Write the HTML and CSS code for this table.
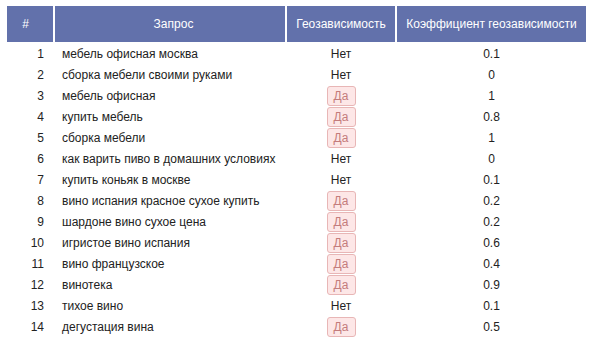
FILE: index.html
```html
<!DOCTYPE html>
<html>
<head>
<meta charset="utf-8">
<link rel="stylesheet" href="styles.css">
</head>
<body>
<div class="table">
  <div class="row head">
    <div class="c num">#</div>
    <div class="c q">Запрос</div>
    <div class="c geo">Геозависимость</div>
    <div class="c k">Коэффициент геозависимости</div>
  </div>
  <div class="row"><div class="c num">1</div><div class="c q">мебель офисная москва</div><div class="c geo">Нет</div><div class="c k">0.1</div></div>
  <div class="row"><div class="c num">2</div><div class="c q">сборка мебели своими руками</div><div class="c geo">Нет</div><div class="c k">0</div></div>
  <div class="row"><div class="c num">3</div><div class="c q">мебель офисная</div><div class="c geo"><span class="yes">Да</span></div><div class="c k">1</div></div>
  <div class="row"><div class="c num">4</div><div class="c q">купить мебель</div><div class="c geo"><span class="yes">Да</span></div><div class="c k">0.8</div></div>
  <div class="row"><div class="c num">5</div><div class="c q">сборка мебели</div><div class="c geo"><span class="yes">Да</span></div><div class="c k">1</div></div>
  <div class="row"><div class="c num">6</div><div class="c q">как варить пиво в домашних условиях</div><div class="c geo">Нет</div><div class="c k">0</div></div>
  <div class="row"><div class="c num">7</div><div class="c q">купить коньяк в москве</div><div class="c geo">Нет</div><div class="c k">0.1</div></div>
  <div class="row"><div class="c num">8</div><div class="c q">вино испания красное сухое купить</div><div class="c geo"><span class="yes">Да</span></div><div class="c k">0.2</div></div>
  <div class="row"><div class="c num">9</div><div class="c q">шардоне вино сухое цена</div><div class="c geo"><span class="yes">Да</span></div><div class="c k">0.2</div></div>
  <div class="row"><div class="c num">10</div><div class="c q">игристое вино испания</div><div class="c geo"><span class="yes">Да</span></div><div class="c k">0.6</div></div>
  <div class="row"><div class="c num">11</div><div class="c q">вино французское</div><div class="c geo"><span class="yes">Да</span></div><div class="c k">0.4</div></div>
  <div class="row"><div class="c num">12</div><div class="c q">винотека</div><div class="c geo"><span class="yes">Да</span></div><div class="c k">0.9</div></div>
  <div class="row"><div class="c num">13</div><div class="c q">тихое вино</div><div class="c geo">Нет</div><div class="c k">0.1</div></div>
  <div class="row"><div class="c num">14</div><div class="c q">дегустация вина</div><div class="c geo"><span class="yes">Да</span></div><div class="c k">0.5</div></div>
</div>
</body>
</html>
```
FILE: styles.css
```css
html, body {
  margin: 0;
  padding: 0;
  background: #ffffff;
}
body {
  font-family: "Liberation Sans", Arial, sans-serif;
  font-size: 12px;
  color: #222222;
}
.table {
  padding: 6px 0 0 7px;
  display: flex;
  flex-direction: column;
}
.row {
  display: grid;
  grid-template-columns: 46px 230px 108px 189px;
  column-gap: 2px;
  height: 21px;
  align-items: center;
}
.row.head {
  height: 36px;
  margin-bottom: 1px;
  align-items: stretch;
}
.head .c {
  background: #6271ab;
  color: #ffffff;
  display: flex;
  align-items: center;
  justify-content: center;
  padding: 0;
}
.c.num {
  text-align: right;
  padding-right: 9px;
}
.c.q {
  padding-left: 7px;
}
.c.geo, .c.k {
  text-align: center;
}
.yes {
  display: inline-block;
  box-sizing: border-box;
  width: 29px;
  height: 20px;
  line-height: 18px;
  border: 1px solid #e8b6b6;
  border-radius: 3px;
  background: #fde7e7;
  color: #c47c7c;
  text-align: center;
  vertical-align: middle;
}
```
